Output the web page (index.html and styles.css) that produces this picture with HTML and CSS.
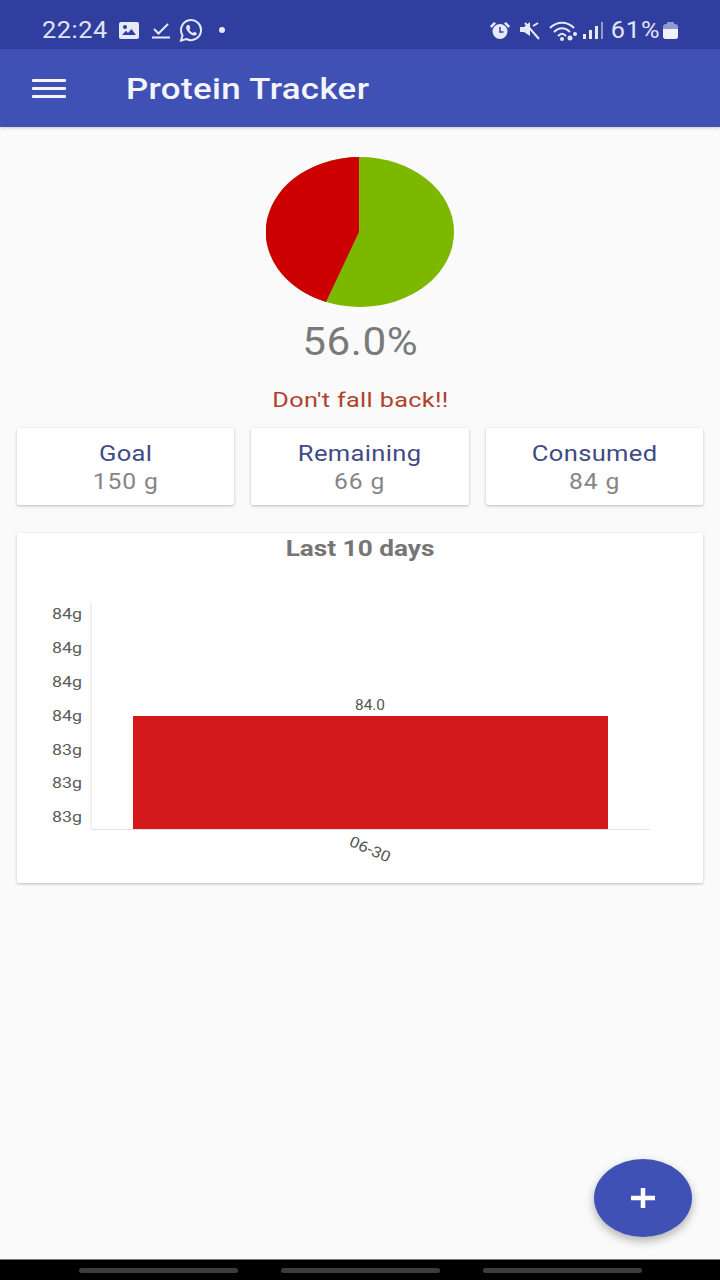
FILE: index.html
```html
<!DOCTYPE html>
<html lang="en">
<head>
    <meta charset="UTF-8">
    <meta name="viewport" content="width=device-width, initial-scale=1.0">
    <title>Protein Tracker</title>
    <link rel="stylesheet" href="styles.css">
</head>
<body>

<div class="app">
    <div class="status-bar">
        <div class="status-left">
            <span class="clock">22:24</span>
            <svg class="icon-gallery" width="20" height="17" viewBox="0 0 20 17">
                <path fill="#e6e9f7" fill-rule="evenodd" d="M2 0h16a2 2 0 0 1 2 2v13a2 2 0 0 1-2 2H2a2 2 0 0 1-2-2V2a2 2 0 0 1 2-2zM3 13h14l-4.500-6-3.500 4-2-2.200z"/>
                <circle cx="6" cy="5" r="2" fill="#303f9f"/>
            </svg>
            <svg class="icon-check" width="19" height="17" viewBox="0 0 19 17">
                <path fill="none" stroke="#e6e9f7" stroke-width="2" d="M2 7l4.500 4.500L16 2M0 15.500h18"/>
            </svg>
            <svg class="icon-whatsapp" width="24" height="23" viewBox="0 0 24 23">
                <path fill="none" stroke="#e6e9f7" stroke-width="2" d="M2 21.500l1.500-5.200A10 10 0 1 1 7.500 20z"/>
                <path fill="#e6e9f7" d="M8.500 6c-1.500 1-2 3 0 6s5 4.700 7 4.500 2.500-1.700 2.200-2.500l-2.500-1.200-1.200 1.300c-1.500-.5-3-2-3.700-3.600l1-1.200L10.300 6z"/>
            </svg>
            <span class="notif-dot"></span>
        </div>
        <div class="status-right">
            <svg class="icon-alarm" width="20" height="19" viewBox="0 0 20 19">
                <circle cx="10" cy="10.500" r="7.500" fill="#e6e9f7"/>
                <path fill="none" stroke="#303f9f" stroke-width="1.500" d="M10 6v5h3.500"/>
                <path fill="#e6e9f7" d="M0 5l4-4 2 1.500L1.500 7zM20 5l-4-4-2 1.500L18.500 7z"/>
            </svg>
            <svg class="icon-mute" width="21" height="19" viewBox="0 0 21 19">
                <path fill="#e6e9f7" d="M0 6h4l6-5v14l-6-4H0z"/>
                <path fill="none" stroke="#e6e9f7" stroke-width="2" d="M5 2l14 16M13 5l5-3"/>
            </svg>
            <svg class="icon-wifi" width="29" height="21" viewBox="0 0 29 21">
                <g fill="none" stroke="#e6e9f7" stroke-width="2">
                    <path d="M1 8c7-7 17-7 24 0"/>
                    <path d="M5 12c5-5 11-5 16 0"/>
                    <path d="M9 16c3-3 5-3 8 0"/>
                </g>
                <circle cx="13" cy="19" r="2" fill="#e6e9f7"/>
                <circle cx="26" cy="14" r="2" fill="#e6e9f7"/>
                <circle cx="21" cy="18" r="2.500" fill="#e6e9f7"/>
            </svg>
            <svg class="icon-signal" width="20" height="17" viewBox="0 0 20 17">
                <rect x="0" y="12" width="3" height="5" fill="#e6e9f7"/>
                <rect x="6" y="8" width="3" height="9" fill="#e6e9f7"/>
                <rect x="12" y="4" width="3" height="13" fill="#e6e9f7"/>
                <rect x="18" y="0" width="2" height="17" fill="#8f9ad0"/>
            </svg>
            <span class="battery-text">61%</span>
            <span class="battery"><span class="battery-fill"></span></span>
        </div>
    </div>

    <header class="toolbar">
        <div class="menu-btn">
            <span></span>
            <span></span>
            <span></span>
        </div>
        <h1>Protein Tracker</h1>
    </header>

    <main class="content">
        <svg class="pie" width="188" height="150" viewBox="0 0 188 150">
            <ellipse cx="94" cy="75" rx="94" ry="75" fill="#7cb800"/>
            <path fill="#cc0000" d="M93 0A94 75 0 0 0 60 145L93 75z"/>
        </svg>
        <div class="percent">56.0%</div>
        <div class="message">Don't fall back!!</div>

        <div class="stats">
            <div class="stat-card">
                <div class="stat-title">Goal</div>
                <div class="stat-value">150 g</div>
            </div>
            <div class="stat-card">
                <div class="stat-title">Remaining</div>
                <div class="stat-value">66 g</div>
            </div>
            <div class="stat-card">
                <div class="stat-title">Consumed</div>
                <div class="stat-value">84 g</div>
            </div>
        </div>

        <div class="chart-card">
            <div class="chart-title">Last 10 days</div>
            <svg class="chart" width="686" height="310" viewBox="0 0 686 310">
                <g class="y-labels">
                    <text x="65" y="46" textLength="30" lengthAdjust="spacingAndGlyphs">84g</text>
                    <text x="65" y="80" textLength="30" lengthAdjust="spacingAndGlyphs">84g</text>
                    <text x="65" y="114" textLength="30" lengthAdjust="spacingAndGlyphs">84g</text>
                    <text x="65" y="148" textLength="30" lengthAdjust="spacingAndGlyphs">84g</text>
                    <text x="65" y="182" textLength="30" lengthAdjust="spacingAndGlyphs">83g</text>
                    <text x="65" y="215" textLength="30" lengthAdjust="spacingAndGlyphs">83g</text>
                    <text x="65" y="249" textLength="30" lengthAdjust="spacingAndGlyphs">83g</text>
                </g>
                <path class="axis" d="M74 29v227M74 256.500h559"/>
                <rect x="116" y="143" width="475" height="113" fill="#d3191c"/>
                <text class="bar-label" x="353" y="137" textLength="30" lengthAdjust="spacingAndGlyphs">84.0</text>
                <text class="x-label" transform="translate(351 281) rotate(24)" textLength="43" lengthAdjust="spacingAndGlyphs">06-30</text>
            </svg>
        </div>
    </main>

    <div class="fab">
        <svg width="24" height="20" viewBox="0 0 24 20">
            <path fill="none" stroke="#fff" stroke-width="4.500" d="M12 0v20M0 10h24"/>
        </svg>
    </div>

    <div class="nav-bar">
        <span></span>
        <span></span>
        <span></span>
    </div>
</div>

</body>
</html>
```

FILE: styles.css
```css
body {
    margin: 0;
    font-family: Roboto, "Liberation Sans", sans-serif;
    background-color: #fafafa;
}
.app {
    position: relative;
    display: flex;
    flex-direction: column;
    width: 720px;
    height: 1280px;
    overflow: hidden;
}

/* status bar */
.status-bar {
    display: flex;
    justify-content: space-between;
    align-items: center;
    height: 49px;
    flex-shrink: 0;
    padding: 11px 42px 0 42px;
    box-sizing: border-box;
    background-color: #303f9f;
    color: #e0e4f5;
}
.status-left, .status-right {
    display: flex;
    align-items: center;
}
.clock {
    font-size: 23px;
    letter-spacing: 0.5px;
    width: 77px;
    transform: scaleX(1.1);
    transform-origin: left center;
}
.icon-check {
    margin-left: 13px;
}
.icon-whatsapp {
    margin-left: 8px;
}
.notif-dot {
    width: 6px;
    height: 6px;
    margin-left: 16px;
    border-radius: 50%;
    background-color: #e6e9f7;
}
.icon-mute {
    margin-left: 10px;
}
.icon-wifi {
    margin-left: 8px;
}
.icon-signal {
    margin-left: 5px;
}
.battery-text {
    font-size: 23px;
    letter-spacing: 0.8px;
    margin-left: 10px;
    transform: scaleX(1.1);
}
.battery {
    position: relative;
    width: 15px;
    height: 15px;
    margin: 2px 0 0 5px;
    border-radius: 3px;
    background-color: #8f9ad0;
}
.battery::before {
    content: "";
    position: absolute;
    left: 4px;
    top: -2px;
    width: 7px;
    height: 2px;
    background-color: #8f9ad0;
}
.battery-fill {
    position: absolute;
    left: 0;
    right: 0;
    bottom: 0;
    height: 10px;
    border-radius: 0 0 3px 3px;
    background-color: #f0f1fa;
}

/* toolbar */
.toolbar {
    display: flex;
    align-items: center;
    height: 78px;
    flex-shrink: 0;
    padding-left: 32px;
    box-sizing: border-box;
    background-color: #3f51b5;
    box-shadow: 0 1px 3px rgba(0,0,0,0.2);
}
.menu-btn {
    display: flex;
    flex-direction: column;
    gap: 5px;
    width: 34px;
}
.menu-btn span {
    height: 3px;
    border-radius: 1px;
    background-color: #f4f5fb;
}
.toolbar h1 {
    margin: 0 0 0 60px;
    font-size: 30px;
    font-weight: 500;
    letter-spacing: 0.3px;
    color: #f4f5fb;
    transform: scaleX(1.163);
    transform-origin: left center;
}

/* content */
.content {
    flex: 1;
    display: flex;
    flex-direction: column;
    align-items: center;
    padding: 30px 17px 0;
}
.pie {
    display: block;
}
.percent {
    margin-top: 13px;
    font-size: 38px;
    line-height: 44px;
    letter-spacing: 0.5px;
    color: #7a7a7a;
    transform: scaleX(1.11);
}
.message {
    margin-top: 23px;
    font-size: 21px;
    line-height: 26px;
    letter-spacing: 0.3px;
    color: #b0412c;
    transform: scaleX(1.2);
}
.stats {
    display: grid;
    grid-template-columns: repeat(3, 1fr);
    gap: 17px;
    width: 100%;
    margin-top: 15px;
}
.stat-card {
    height: 77px;
    padding-top: 12px;
    box-sizing: border-box;
    text-align: center;
    background: white;
    border-radius: 2px;
    box-shadow: 0 1px 3px rgba(0,0,0,0.25);
}
.stat-title {
    font-size: 22px;
    line-height: 27px;
    letter-spacing: 0.3px;
    color: #3f4b85;
    transform: scaleX(1.16);
}
.stat-value {
    font-size: 22px;
    line-height: 29px;
    letter-spacing: 0.8px;
    color: #858585;
    transform: scaleX(1.12);
}
.chart-card {
    width: 100%;
    height: 350px;
    margin-top: 28px;
    background: white;
    border-radius: 2px;
    box-shadow: 0 1px 3px rgba(0,0,0,0.25);
}
.chart-title {
    height: 40px;
    padding-top: 3px;
    box-sizing: border-box;
    text-align: center;
    font-size: 22px;
    line-height: 26px;
    font-weight: 700;
    color: #757575;
    transform: scaleX(1.19);
}
.chart {
    display: block;
}
.y-labels text {
    font-size: 15px;
    text-anchor: end;
    fill: #5c5c5c;
}
.axis {
    fill: none;
    stroke: #e2e2e2;
    stroke-width: 1;
}
.bar-label {
    font-size: 14px;
    text-anchor: middle;
    fill: #555;
}
.x-label {
    font-size: 15px;
    text-anchor: middle;
    fill: #555;
}

/* floating button */
.fab {
    position: absolute;
    left: 594px;
    top: 1159px;
    display: flex;
    align-items: center;
    justify-content: center;
    width: 98px;
    height: 78px;
    border-radius: 50%;
    background-color: #3f51b5;
    box-shadow: 0 4px 10px rgba(0,0,0,0.3);
}

/* bottom nav */
.nav-bar {
    display: flex;
    justify-content: center;
    gap: 43px;
    align-items: center;
    height: 21px;
    flex-shrink: 0;
    box-sizing: border-box;
    background-color: #000;
    border-top: 1px solid #777;
}
.nav-bar span {
    width: 159px;
    height: 5px;
    border-radius: 3px;
    background-color: #3c3c3c;
}
```
